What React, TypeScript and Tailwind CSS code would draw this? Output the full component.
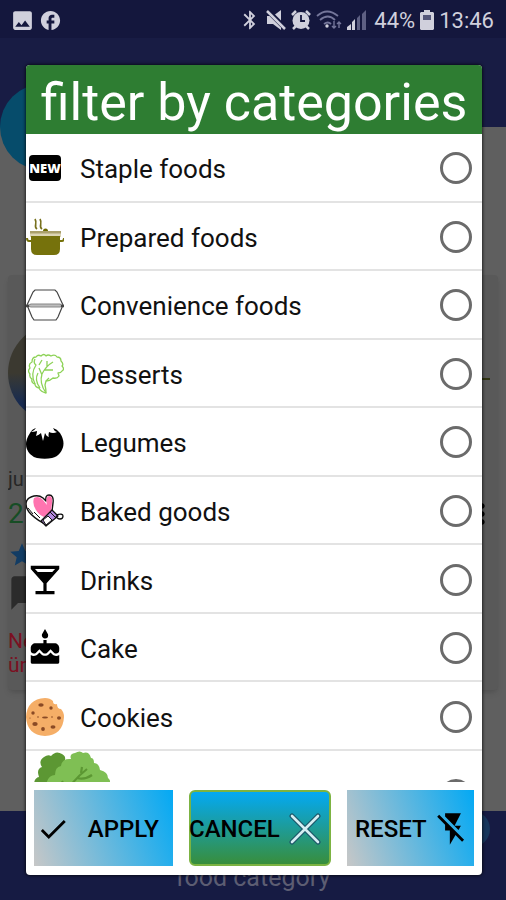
import React from 'react';
import {
  MdBluetooth,
  MdCake,
  MdCheck,
  MdFacebook,
  MdFlashOff,
  MdImage,
  MdLocalBar,
  MdModeComment,
  MdMoreVert,
  MdStar,
} from 'react-icons/md';

const NewIcon = () => (
  <span className="mx-auto flex h-[26px] w-8 items-center justify-center rounded-sm bg-black font-['Open_Sans',sans-serif] text-[13px] font-extrabold text-white">
    NEW
  </span>
);

const PotIcon = () => (
  <svg viewBox="0 0 38 38" className="size-[38px]" aria-hidden="true">
    <path d="M11 11c-4-3 1-5-2-10M16 11c-4-3 1-5-2-10" fill="none" stroke="#77701c" strokeWidth="1.700" />
    <path d="M17 13a2.500 2.500 0 0 1 5 0z" fill="#6d6a00" />
    <path d="M4 13h31v6H4z" fill="#dcd5b4" />
    <path d="M4 13h31v2.500H4z" fill="#aaa06b" />
    <path d="M5 18h29v13q0 6-6 6H11q-6 0-6-6z" fill="#76720c" />
    <path d="M5 23H3q-2 0-2-3M34 23h2q2 0 2-3" fill="none" stroke="#76720c" strokeWidth="2" />
  </svg>
);

const BoxIcon = () => (
  <svg viewBox="0 0 38 38" className="size-[38px]" fill="none" stroke="#444" strokeWidth="1.200" aria-hidden="true">
    <path d="M1 19 7 6l2-2h20l2 2 6 13-5 12-2 3H8l-2-3z" />
    <path d="M5 18h29l3 2-3 1H5l-4-1z" fill="#bdbdbd" stroke="#888" />
    <path d="M0 20h3M35 20h3" strokeWidth="2.500" />
  </svg>
);

const LettuceOutlineIcon = () => (
  <svg viewBox="0 0 38 42" className="h-[42px] w-[38px]" fill="none" stroke="#8dd257" strokeWidth="1.300" strokeLinejoin="round" aria-hidden="true">
    <path d="M20 40q-5-1-7-5-4-1-4-4-4-1-3-5-3-2-2-5-3-3 0-6-2-4 2-6 0-5 4-5 2-3 5-1 3-3 5 0 2-2 5 0 4-2 6 1 4 0 4 4 3 3 1 5 3 3 0 5-1 2-4 2l1 3q-2 3-6 2-3 3-7 3l-1 4q1 4 1 8z" />
    <path d="M9 31Q4 21 10 12q-3-2-1-6M20 40q-7-10-4-19 4-8 11-12M16 22l-3-7M18 17l9 0M21 14l0-6M14 35q-6-8-2-15M20 28l3-3M13 12l3-5" />
  </svg>
);

const TomatoIcon = () => (
  <svg viewBox="0 0 38 38" className="size-[38px]" aria-hidden="true">
    <path
      d="M10 5q-4 1-6 5-8 12 0 21 3 3 7 4 8 1.500 15 0 5-1 8-5 7-9 0-20-3-4-7-5 1 3 4 4-4 2-8 0-1 4 0 5-3-1-4-4-1 4-2 8-1-4-2-8-2 2-5 3 1-3 1-5-3 1-6 1 4-2 5-4"
      fill="#000"
    />
  </svg>
);

const MittIcon = () => (
  <svg viewBox="0 0 38 38" className="size-[38px]" strokeLinejoin="round" aria-hidden="true">
    <path d="M0 12q0-5 5-7 7-3 12 1l3 3q-1-6 3-6 5 0 4 8l-1 8-9 12q-9-5-14-11-3-4-3-8" fill="#fff" stroke="#111" strokeWidth="1.400" />
    <path d="M8 6q5-3 9 2l4 5q-2-8 2-9 4 0 3 7l-1 8-7 6q-5-2-8-7-4-6-2-12" fill="#ff74b0" />
    <path d="m26 18 6 6-12 10-5-5z" fill="#b58be0" stroke="#111" strokeWidth="1.300" />
    <path d="m17 28 5-4 4 4-6 5z" fill="#fff" stroke="#111" strokeWidth="1" />
    <path d="m24 20 6 6M2 16l5 6M8 20l6 6" stroke="#111" strokeWidth="1" fill="none" />
    <path d="M30 23q7-2 7 1t-3 3-4-3" fill="none" stroke="#111" strokeWidth="1.300" />
  </svg>
);

const CookieIcon = () => (
  <svg viewBox="0 0 38 38" className="size-[38px]" aria-hidden="true">
    <path d="M19 0q5 0 8 3 0 4 4 3 0 5 4 5 3 3 3 8-1 18-19 19Q1 37 0 19 1 1 19 0" fill="#f5ae67" />
    <g fill="#8a4a25">
      <ellipse cx="15" cy="7" rx="2.700" ry="1.800" />
      <circle cx="25" cy="10" r="1.700" />
      <circle cx="7" cy="15" r="1.700" />
      <ellipse cx="9" cy="26" rx="2.700" ry="2" />
      <circle cx="17" cy="31" r="1.900" />
      <ellipse cx="27" cy="29" rx="2.500" ry="1.700" />
      <ellipse cx="33" cy="20" rx="2" ry="1.700" />
      <ellipse cx="19" cy="19.500" rx="3" ry="1" />
      <circle cx="12" cy="19" r=".8" />
      <circle cx="26" cy="19" r=".8" />
      <circle cx="4" cy="20" r=".6" />
    </g>
  </svg>
);

const CabbageIcon = () => (
  <svg viewBox="0 0 76 34" className="h-[34px] w-[76px]" aria-hidden="true">
    <path d="M0 34q0-7 5-8-3-8 3-10-4-6 2-10 4-3 7-1 5-6 11-2 4 2 3 6l-4 25z" fill="#5c9733" />
    <path d="M12 34q2-10 9-10 0-8 6-9 1-8 10-7-2-5 4-6 5-3 8 0 6-2 8 5 3 0 3 5 5 0 6 7 8 2 8 8 3 2 2 7z" fill="#7fbf54" />
    <path d="M37 34q6-8 16-16M43 27q8 2 15-3M47 22l1-6M30 34l-2-4" fill="none" stroke="#5c9733" strokeWidth="2.200" />
  </svg>
);

const MuteIcon = () => (
  <svg viewBox="0 0 20 20" className="size-5" aria-hidden="true">
    <path d="M1 6h6l8-6v20l-8-6H1z" fill="currentColor" />
    <path d="M1 0 20 19" stroke="#14173d" strokeWidth="5" />
    <path d="M1 1 19 19" stroke="currentColor" strokeWidth="2.500" />
  </svg>
);

const AlarmIcon = () => (
  <svg viewBox="0 0 20 20" className="size-5" aria-hidden="true">
    <circle cx="10" cy="10.500" r="8.500" fill="currentColor" />
    <path d="m1 5 4-4M19 5l-4-4M5 16l-3 3M15 16l3 3" stroke="currentColor" strokeWidth="2.500" />
    <path d="M10 5v6h4" fill="none" stroke="#14173d" strokeWidth="1.800" />
  </svg>
);

const WifiIcon = () => (
  <svg viewBox="0 0 26 22" className="h-[22px] w-[26px]" fill="none" stroke="#74769a" strokeWidth="1.800" aria-hidden="true">
    <path d="M1 7q10-9 21 0M4 11q8-7 15 0M8 15q4-3 7 0" />
    <circle cx="11" cy="17" r="1.700" fill="#d0d0dc" stroke="none" />
    <path d="M18 12v7M16 17l2 2 2-2M23 19v-6M21 15l2-2 2 2" strokeWidth="1.400" />
  </svg>
);

const SignalIcon = () => (
  <svg viewBox="0 0 20 20" className="size-5" aria-hidden="true">
    <path d="M0 20v-3l4-3v6zM5 20v-8l3-3v11z" fill="#d0d0dc" />
    <path d="M10 20V8l3-3v15zM15 20V4l4-4v20z" fill="#5e6083" />
  </svg>
);

const BatteryIcon = () => (
  <svg viewBox="0 0 14 20" className="h-5 w-3.5" aria-hidden="true">
    <path d="M4 0h6v2h3l1 1v16l-1 1H1l-1-1V3l1-1h3z" fill="#d0d0dc" />
    <path d="M3 5h8v5H3z" fill="#55577a" />
  </svg>
);

const CrossIcon = () => (
  <svg viewBox="0 0 32 32" className="size-8 shrink-0" fill="none" strokeLinecap="round" aria-hidden="true">
    <path d="m3 3 26 26M29 3 3 29" stroke="#1c5668" strokeWidth="5" />
    <path d="m3 3 26 26M29 3 3 29" stroke="#d4eef2" strokeWidth="2.600" />
  </svg>
);

const CATEGORIES = [
  { name: 'Staple foods', icon: <NewIcon /> },
  { name: 'Prepared foods', icon: <PotIcon /> },
  { name: 'Convenience foods', icon: <BoxIcon /> },
  { name: 'Desserts', icon: <LettuceOutlineIcon /> },
  { name: 'Legumes', icon: <TomatoIcon /> },
  { name: 'Baked goods', icon: <MittIcon /> },
  { name: 'Drinks', icon: <MdLocalBar size={38} /> },
  { name: 'Cake', icon: <MdCake size={38} /> },
  { name: 'Cookies', icon: <CookieIcon /> },
];

const radioClass = 'size-8 shrink-0 appearance-none rounded-full border-3 border-[#6b6b6b] checked:bg-[#2e7d32]';

const StatusBar = () => (
  <header className="flex h-[38px] shrink-0 items-center bg-[#14173d] pl-2.5 pr-3 pt-0.5 text-[#d0d0dc]">
    <MdImage size={25} />
    <MdFacebook size={23} className="ml-1" />
    <div className="ml-auto flex items-center gap-[5px]">
      <MdBluetooth size={22} />
      <MuteIcon />
      <AlarmIcon />
      <WifiIcon />
      <SignalIcon />
      <span className="ml-0.5 text-[22px]">44%</span>
      <BatteryIcon />
      <span className="text-[22px]">13:46</span>
    </div>
  </header>
);

const Backdrop = () => (
  <div className="flex h-full flex-col">
    <StatusBar />
    <div className="h-[89px] shrink-0 bg-[#181c44]" />
    <main className="relative flex-1 bg-[#5f5f5f] px-2 pt-[148px]">
      <span className="absolute -top-[43px] left-0 size-[86px] rounded-full bg-[#064c6b]" />
      <section className="flex h-[415px] flex-col overflow-hidden rounded-sm bg-[#595959] pt-12 shadow-md">
        <div className="flex items-center justify-between">
          <span className="size-[100px] rounded-full bg-linear-to-b from-[#3b3930] from-50% to-[#172a50] to-80%" />
          <span className="mr-2 mt-3 h-0.5 w-3 bg-[#303412]" />
        </div>
        <p className="mt-11 text-xl leading-6 text-[#262626]">ju</p>
        <div className="flex items-center justify-between">
          <p className="text-[28px] leading-[46px] text-[#174d25]">2</p>
          <MdMoreVert size={32} className="text-black" />
        </div>
        <MdStar size={28} className="mt-1 shrink-0 text-[#123c64]" />
        <MdModeComment size={40} className="mt-1 shrink-0 -scale-x-100 text-[#2b2b2b]" />
        <p className="mt-4 w-6 text-[21px] leading-6 text-[#7b1021]">Ne ür</p>
      </section>
    </main>
    <footer className="relative flex h-[89px] shrink-0 items-end justify-center bg-[#161b43] pb-1.5">
      <span className="absolute right-4 top-0 size-9 rounded-full bg-[#17365c]" />
      <span className="text-[25px] leading-8 text-[#5c5d72]">food category</span>
    </footer>
  </div>
);

export default function App() {
  return (
    <div className="relative h-screen overflow-hidden font-[Roboto,sans-serif]">
      <Backdrop />

      <div className="absolute inset-0 flex pb-[25px] pl-[26px] pr-6 pt-[65px]">
        <form
          role="dialog"
          aria-labelledby="dialog-title"
          className="flex min-w-0 flex-1 flex-col overflow-hidden rounded-sm bg-white text-black shadow-[0_0_3px_1px_rgba(0,0,0,0.6)]"
        >
          <h1
            id="dialog-title"
            className="flex h-[69px] shrink-0 items-center justify-center whitespace-nowrap bg-[#2e7d32] pt-1.5 text-[52px] leading-none text-white"
          >
            filter by categories
          </h1>

          <ul className="grid min-h-0 flex-1 auto-rows-fr">
            {CATEGORIES.map(({ name, icon }) => (
              <li key={name} className="border-b-2 border-[#e3e3e3]">
                <label className="flex h-full items-center pr-2.5 pt-0.5">
                  <span className="flex w-[38px] shrink-0 justify-center">{icon}</span>
                  <span className="ml-4 flex-1 pt-0.5 text-[26px] leading-8 text-[#111]">{name}</span>
                  <input type="radio" name="category" value={name} className={radioClass} />
                </label>
              </li>
            ))}
          </ul>
          <div className="flex h-[31px] shrink-0 items-start justify-between overflow-hidden pl-2 pr-2.5">
            <CabbageIcon />
            <input type="radio" name="category" value="vegetables" aria-label="Vegetables" className={`mt-7 ${radioClass}`} />
          </div>

          <div className="grid shrink-0 grid-cols-[139fr_142fr_127fr] gap-4 px-2 pb-[9px] pt-2 text-2xl font-medium">
            <button
              type="button"
              className="flex h-[76px] items-center justify-between bg-linear-70/srgb from-[#c7c7c7] to-[#03a9f4] pl-0.5 pr-3.5 pt-0.5"
            >
              <MdCheck size={34} />
              APPLY
            </button>
            <button
              type="button"
              className="flex h-[76px] items-center justify-between rounded-md border-2 border-[#7cb342] bg-linear-to-b/srgb from-[#03a9f4] to-[#388e3c] pr-2 pt-0.5"
            >
              <span className="-ml-0.5">CANCEL</span>
              <CrossIcon />
            </button>
            <button
              type="button"
              className="flex h-[76px] items-center justify-between bg-linear-70/srgb from-[#c7c7c7] to-[#03a9f4] pl-2 pr-0.5 pt-0.5"
            >
              RESET
              <MdFlashOff size={38} />
            </button>
          </div>
        </form>
      </div>
    </div>
  );
}
